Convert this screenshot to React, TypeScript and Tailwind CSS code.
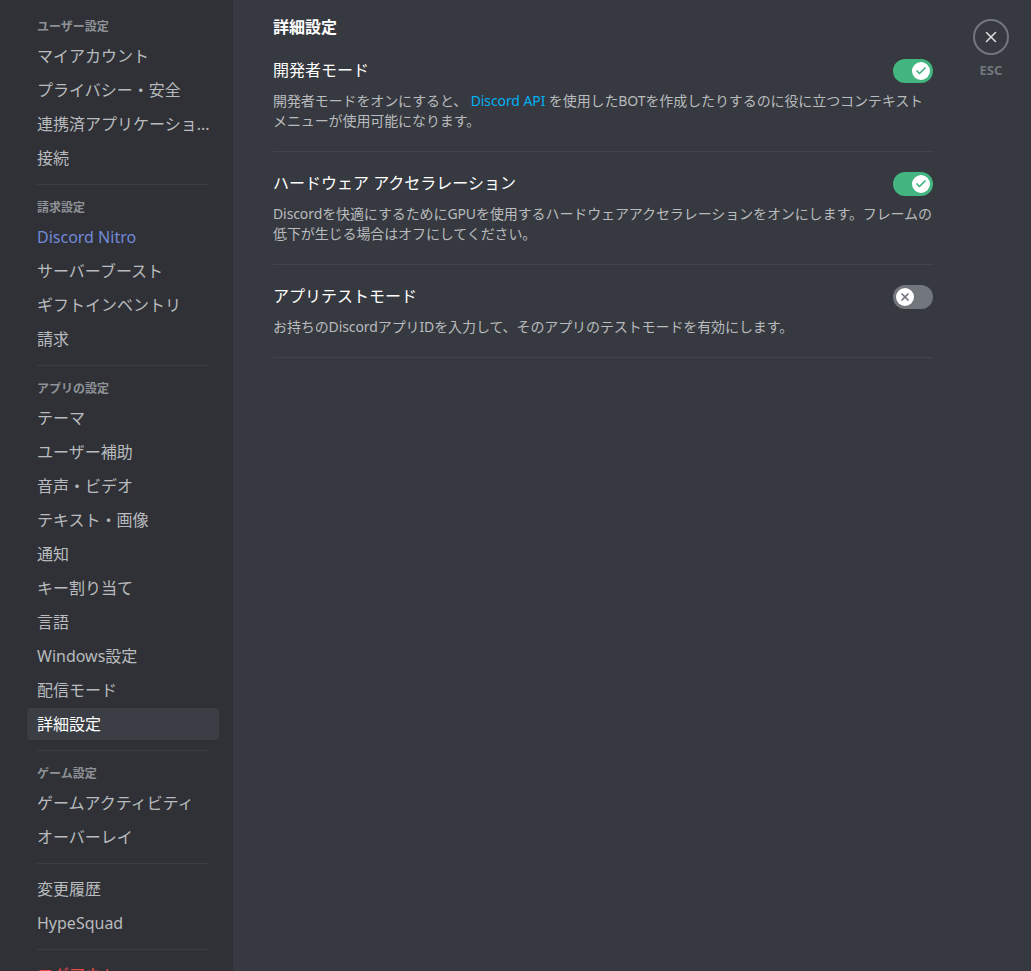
import React from 'react';
import { Check, X } from 'lucide-react';

type NavItem = { label: string; color?: string; selected?: boolean };
type NavGroup = { header?: string; items: NavItem[] };

const groups: NavGroup[] = [
  {
    header: 'ユーザー設定',
    items: [
      { label: 'マイアカウント' },
      { label: 'プライバシー・安全' },
      { label: '連携済アプリケーショ...' },
      { label: '接続' },
    ],
  },
  {
    header: '請求設定',
    items: [
      { label: 'Discord Nitro', color: 'text-[#7289da]' },
      { label: 'サーバーブースト' },
      { label: 'ギフトインベントリ' },
      { label: '請求' },
    ],
  },
  {
    header: 'アプリの設定',
    items: [
      { label: 'テーマ' },
      { label: 'ユーザー補助' },
      { label: '音声・ビデオ' },
      { label: 'テキスト・画像' },
      { label: '通知' },
      { label: 'キー割り当て' },
      { label: '言語' },
      { label: 'Windows設定' },
      { label: '配信モード' },
      { label: '詳細設定', selected: true },
    ],
  },
  {
    header: 'ゲーム設定',
    items: [{ label: 'ゲームアクティビティ' }, { label: 'オーバーレイ' }],
  },
  {
    items: [{ label: '変更履歴' }, { label: 'HypeSquad' }],
  },
  {
    items: [{ label: 'ログアウト', color: 'text-[#f04747]' }],
  },
];

function Toggle({ on }: { on: boolean }) {
  return (
    <div
      className={`relative w-10 h-6 rounded-full shrink-0 ${on ? 'bg-[#43b581]' : 'bg-[#72767d]'}`}
    >
      <div
        className={`absolute top-[3px] w-[18px] h-[18px] rounded-full bg-white flex items-center justify-center ${
          on ? 'left-[19px]' : 'left-[3px]'
        }`}
      >
        {on ? (
          <Check className="w-3 h-3 text-[#43b581]" strokeWidth={3.5} />
        ) : (
          <X className="w-3 h-3 text-[#72767d]" strokeWidth={3.5} />
        )}
      </div>
    </div>
  );
}

function SettingRow({
  title,
  on,
  lines,
}: {
  title: string;
  on: boolean;
  lines: React.ReactNode[];
}) {
  return (
    <div className="pb-5 mb-[19px] border-b border-[#42454a]">
      <div className="flex justify-between items-start h-6">
        <div className="text-[16px] leading-6 text-white">{title}</div>
        <div className="mt-px">
          <Toggle on={on} />
        </div>
      </div>
      <div className="mt-[9px] text-[14px] text-[#b9bbbe]">
        {lines.map((line, i) => (
          <div key={i} className="h-5 leading-5 whitespace-nowrap tracking-[-0.1px]">
            {line}
          </div>
        ))}
      </div>
    </div>
  );
}

export default function App() {
  return (
    <div className="flex h-screen w-full overflow-hidden bg-[#36393f] font-['Noto_Sans','Noto_Sans_CJK_JP',sans-serif]">
      <div className="w-[233px] shrink-0 bg-[#2f3136] pt-[13px] pl-[27px] pr-[14px] overflow-hidden">
        {groups.map((group, gi) => (
          <div key={gi}>
            {gi > 0 && <div className="mx-[10px] mt-[10px] mb-[9px] h-px bg-[#3b3d42]" />}
            {group.header && (
              <div className="h-[27px] px-[10px] py-[6px] text-[12px] leading-[15px] font-bold text-[#8e9297]">
                {group.header}
              </div>
            )}
            {group.items.map((item) => (
              <div
                key={item.label}
                className={`h-8 mb-[2px] px-[10px] flex items-center rounded-[4px] text-[16px] leading-5 whitespace-nowrap overflow-hidden ${
                  item.selected ? 'bg-[#3b3e45] text-white' : item.color || 'text-[#b9bbbe]'
                }`}
              >
                {item.label}
              </div>
            ))}
          </div>
        ))}
      </div>

      <div className="flex pl-10">
        <div className="w-[660px] pt-[17px]">
          <h2 className="h-5 text-[16px] leading-5 font-bold text-white mb-[21px]">詳細設定</h2>

          <SettingRow
            title="開発者モード"
            on
            lines={[
              <>
                開発者モードをオンにすると、 <span className="text-[#00b0f4]">Discord API</span>{' '}
                を使用したBOTを作成したりするのに役に立つコンテキスト
              </>,
              'メニューが使用可能になります。',
            ]}
          />

          <SettingRow
            title="ハードウェア アクセラレーション"
            on
            lines={[
              'Discordを快適にするためにGPUを使用するハードウェアアクセラレーションをオンにします。フレームの',
              '低下が生じる場合はオフにしてください。',
            ]}
          />

          <SettingRow
            title="アプリテストモード"
            on={false}
            lines={['お持ちのDiscordアプリIDを入力して、そのアプリのテストモードを有効にします。']}
          />
        </div>

        <div className="ml-10 pt-[19px] flex flex-col items-center">
          <div className="w-9 h-9 rounded-full border-2 border-[#72767d] flex items-center justify-center">
            <X className="w-[18px] h-[18px] text-[#dcddde]" strokeWidth={2} />
          </div>
          <div className="mt-[7px] text-[13px] leading-4 font-bold text-[#72767d]">ESC</div>
        </div>
      </div>
    </div>
  );
}
